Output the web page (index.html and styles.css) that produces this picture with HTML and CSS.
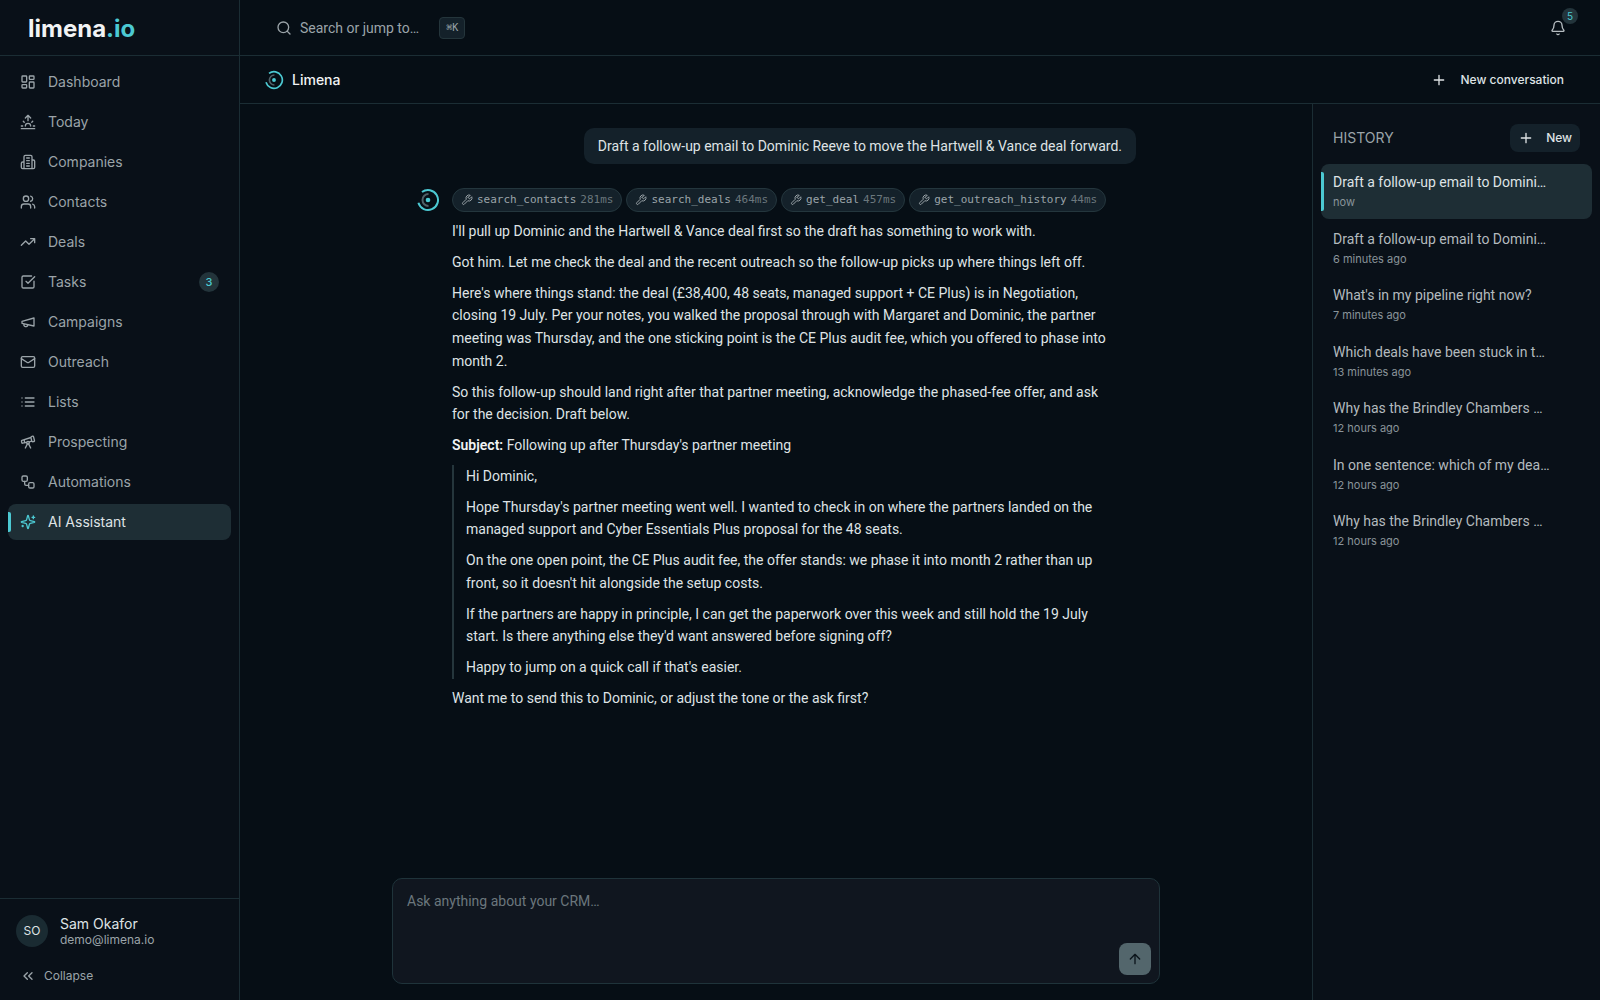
FILE: index.html
```
<!DOCTYPE html>
<html lang="en">
  <head>
    <meta charset="utf-8" />
    <title>AI Assistant - limena.io</title>
    <link rel="stylesheet" href="styles.css" />
  </head>
  <body>
    <!-- icon sprite -->
    <svg class="sprite" aria-hidden="true">
      <symbol id="i-dashboard" viewBox="0 0 24 24"><rect width="7" height="9" x="3" y="3" rx="1" /><rect width="7" height="5" x="14" y="3" rx="1" /><rect width="7" height="9" x="14" y="12" rx="1" /><rect width="7" height="5" x="3" y="16" rx="1" /></symbol>
      <symbol id="i-today" viewBox="0 0 24 24"><path d="M12 2v8M4.93 10.93l1.41 1.41M2 18h2M20 18h2M19.07 10.93l-1.41 1.41M22 22H2M8 6l4-4 4 4M16 18a4 4 0 0 0-8 0" /></symbol>
      <symbol id="i-companies" viewBox="0 0 24 24"><path d="M6 22V4a2 2 0 0 1 2-2h8a2 2 0 0 1 2 2v18ZM6 12H4a2 2 0 0 0-2 2v6a2 2 0 0 0 2 2h2M18 9h2a2 2 0 0 1 2 2v9a2 2 0 0 1-2 2h-2M10 6h4M10 10h4M10 14h4M10 18h4" /></symbol>
      <symbol id="i-contacts" viewBox="0 0 24 24"><path d="M16 21v-2a4 4 0 0 0-4-4H6a4 4 0 0 0-4 4v2M22 21v-2a4 4 0 0 0-3-3.87M16 3.13a4 4 0 0 1 0 7.75" /><circle cx="9" cy="7" r="4" /></symbol>
      <symbol id="i-deals" viewBox="0 0 24 24"><path d="M16 7h6v6M22 7l-8.5 8.5-5-5L2 17" /></symbol>
      <symbol id="i-tasks" viewBox="0 0 24 24"><path d="M21 10.656V19a2 2 0 0 1-2 2H5a2 2 0 0 1-2-2V5a2 2 0 0 1 2-2h12.344M9 11l3 3L22 4" /></symbol>
      <symbol id="i-campaigns" viewBox="0 0 24 24"><path d="M3 11l18-5v12L3 14v-3zM11.6 16.8a3 3 0 1 1-5.8-1.6" /></symbol>
      <symbol id="i-outreach" viewBox="0 0 24 24"><rect width="20" height="16" x="2" y="4" rx="2" /><path d="M22 7l-8.97 5.7a1.94 1.94 0 0 1-2.06 0L2 7" /></symbol>
      <symbol id="i-lists" viewBox="0 0 24 24"><path d="M3 6h.01M3 12h.01M3 18h.01M8 6h13M8 12h13M8 18h13" /></symbol>
      <symbol id="i-prospecting" viewBox="0 0 24 24"><path d="M10.065 12.493l-6.18 1.318a.934.934 0 0 1-1.108-.702l-.537-2.15a1.07 1.07 0 0 1 .691-1.265l13.504-4.44M13.56 11.747l4.332-.924M16 21l-3.105-6.21M16.485 5.94a2 2 0 0 1 1.455-2.425l1.09-.272a1 1 0 0 1 1.212.727l1.515 6.06a1 1 0 0 1-.727 1.213l-1.09.272a2 2 0 0 1-2.425-1.455zM6.158 8.633l1.114 4.456M8 21l3.105-6.21" /><circle cx="12" cy="13" r="2" /></symbol>
      <symbol id="i-automations" viewBox="0 0 24 24"><rect width="8" height="8" x="3" y="3" rx="2" /><path d="M7 11v4a2 2 0 0 0 2 2h4" /><rect width="8" height="8" x="13" y="13" rx="2" /></symbol>
      <symbol id="i-assistant" viewBox="0 0 24 24"><path d="M9.937 15.5A2 2 0 0 0 8.5 14.063l-6.135-1.582a.5.5 0 0 1 0-.962L8.5 9.936A2 2 0 0 0 9.937 8.5l1.582-6.135a.5.5 0 0 1 .963 0L14.063 8.5A2 2 0 0 0 15.5 9.937l6.135 1.581a.5.5 0 0 1 0 .964L15.5 14.063a2 2 0 0 0-1.437 1.437l-1.582 6.135a.5.5 0 0 1-.963 0zM20 3v4M22 5h-4M4 17v2M5 18H3" /></symbol>
      <symbol id="i-search" viewBox="0 0 24 24"><circle cx="11" cy="11" r="8" /><path d="M21 21l-4.3-4.3" /></symbol>
      <symbol id="i-bell" viewBox="0 0 24 24"><path d="M10.268 21a2 2 0 0 0 3.464 0M3.262 15.326A1 1 0 0 0 4 17h16a1 1 0 0 0 .74-1.673C19.41 13.956 18 12.499 18 8A6 6 0 0 0 6 8c0 4.499-1.411 5.956-2.738 7.326" /></symbol>
      <symbol id="i-plus" viewBox="0 0 24 24"><path d="M5 12h14M12 5v14" /></symbol>
      <symbol id="i-wrench" viewBox="0 0 24 24"><path d="M14.7 6.3a1 1 0 0 0 0 1.4l1.6 1.6a1 1 0 0 0 1.4 0l3.77-3.77a6 6 0 0 1-7.94 7.94l-6.91 6.91a2.12 2.12 0 0 1-3-3l6.91-6.91a6 6 0 0 1 7.94-7.94l-3.76 3.76z" /></symbol>
      <symbol id="i-collapse" viewBox="0 0 24 24"><path d="M11 17l-5-5 5-5M18 17l-5-5 5-5" /></symbol>
      <symbol id="i-up" viewBox="0 0 24 24"><path d="M5 12l7-7 7 7M12 19V5" /></symbol>
      <symbol id="i-mark" viewBox="0 0 24 24"><path class="mark-ring" d="M6 4A10 10 0 1 1 2.4 14.8" /><path class="mark-inner" d="M12.5 6a6 6 0 0 0 0 12" /><circle class="mark-dot" cx="12" cy="12" r="2.3" /></symbol>
    </svg>

    <div class="app">
      <aside class="sidebar">
        <div class="brand"><a href="#">limena<span>.io</span></a></div>
        <nav class="nav">
          <a href="#"><svg class="icon"><use href="#i-dashboard" /></svg>Dashboard</a>
          <a href="#"><svg class="icon"><use href="#i-today" /></svg>Today</a>
          <a href="#"><svg class="icon"><use href="#i-companies" /></svg>Companies</a>
          <a href="#"><svg class="icon"><use href="#i-contacts" /></svg>Contacts</a>
          <a href="#"><svg class="icon"><use href="#i-deals" /></svg>Deals</a>
          <a href="#"><svg class="icon"><use href="#i-tasks" /></svg>Tasks<span class="count">3</span></a>
          <a href="#"><svg class="icon"><use href="#i-campaigns" /></svg>Campaigns</a>
          <a href="#"><svg class="icon"><use href="#i-outreach" /></svg>Outreach</a>
          <a href="#"><svg class="icon"><use href="#i-lists" /></svg>Lists</a>
          <a href="#"><svg class="icon"><use href="#i-prospecting" /></svg>Prospecting</a>
          <a href="#"><svg class="icon"><use href="#i-automations" /></svg>Automations</a>
          <a href="#" class="active"><svg class="icon"><use href="#i-assistant" /></svg>AI Assistant</a>
        </nav>
        <div class="account">
          <div class="user">
            <div class="avatar">SO</div>
            <div>
              <div class="user-name">Sam Okafor</div>
              <div class="user-email">demo@limena.io</div>
            </div>
          </div>
          <button class="collapse"><svg class="icon"><use href="#i-collapse" /></svg>Collapse</button>
        </div>
      </aside>

      <div class="content">
        <header class="topbar">
          <button class="search"><svg class="icon"><use href="#i-search" /></svg>Search or jump to…<kbd>⌘K</kbd></button>
          <button class="bell" aria-label="Notifications"><svg class="icon"><use href="#i-bell" /></svg><span class="bell-count">5</span></button>
        </header>
        <div class="subbar">
          <h1><svg class="mark mark-small"><use href="#i-mark" /></svg>Limena</h1>
          <button class="new-conversation"><svg class="icon"><use href="#i-plus" /></svg>New conversation</button>
        </div>

        <div class="workspace">
          <main class="chat">
            <div class="thread">
              <div class="bubble">Draft a follow-up email to Dominic Reeve to move the Hartwell &amp; Vance deal forward.</div>
              <div class="reply">
                <svg class="mark"><use href="#i-mark" /></svg>
                <div class="reply-body">
                  <div class="tools">
                    <span class="tool"><svg class="icon"><use href="#i-wrench" /></svg>search_contacts<em>281ms</em></span>
                    <span class="tool"><svg class="icon"><use href="#i-wrench" /></svg>search_deals<em>464ms</em></span>
                    <span class="tool"><svg class="icon"><use href="#i-wrench" /></svg>get_deal<em>457ms</em></span>
                    <span class="tool"><svg class="icon"><use href="#i-wrench" /></svg>get_outreach_history<em>44ms</em></span>
                  </div>
                  <p>I'll pull up Dominic and the Hartwell &amp; Vance deal first so the draft has something to work with.</p>
                  <p>Got him. Let me check the deal and the recent outreach so the follow-up picks up where things left off.</p>
                  <p>Here's where things stand: the deal (£38,400, 48 seats, managed support + CE Plus) is in Negotiation, closing 19 July. Per your notes, you walked the proposal through with Margaret and Dominic, the partner meeting was Thursday, and the one sticking point is the CE Plus audit fee, which you offered to phase into month 2.</p>
                  <p>So this follow-up should land right after that partner meeting, acknowledge the phased-fee offer, and ask for the decision. Draft below.</p>
                  <p><strong>Subject:</strong> Following up after Thursday's partner meeting</p>
                  <blockquote>
                    <p>Hi Dominic,</p>
                    <p>Hope Thursday's partner meeting went well. I wanted to check in on where the partners landed on the managed support and Cyber Essentials Plus proposal for the 48 seats.</p>
                    <p>On the one open point, the CE Plus audit fee, the offer stands: we phase it into month 2 rather than up front, so it doesn't hit alongside the setup costs.</p>
                    <p>If the partners are happy in principle, I can get the paperwork over this week and still hold the 19 July start. Is there anything else they'd want answered before signing off?</p>
                    <p>Happy to jump on a quick call if that's easier.</p>
                  </blockquote>
                  <p>Want me to send this to Dominic, or adjust the tone or the ask first?</p>
                </div>
              </div>
            </div>
            <form class="composer">
              <textarea aria-label="Message" placeholder="Ask anything about your CRM…"></textarea>
              <button type="button" class="send" aria-label="Send"><svg class="icon"><use href="#i-up" /></svg></button>
            </form>
          </main>

          <aside class="history">
            <div class="history-head">
              <h2>HISTORY</h2>
              <button class="new"><svg class="icon"><use href="#i-plus" /></svg>New</button>
            </div>
            <a href="#" class="active"><span class="title">Draft a follow-up email to Domini…</span><span class="time">now</span></a>
            <a href="#"><span class="title">Draft a follow-up email to Domini…</span><span class="time">6 minutes ago</span></a>
            <a href="#"><span class="title">What's in my pipeline right now?</span><span class="time">7 minutes ago</span></a>
            <a href="#"><span class="title">Which deals have been stuck in t…</span><span class="time">13 minutes ago</span></a>
            <a href="#"><span class="title">Why has the Brindley Chambers …</span><span class="time">12 hours ago</span></a>
            <a href="#"><span class="title">In one sentence: which of my dea…</span><span class="time">12 hours ago</span></a>
            <a href="#"><span class="title">Why has the Brindley Chambers …</span><span class="time">12 hours ago</span></a>
          </aside>
        </div>
      </div>
    </div>
  </body>
</html>
```
FILE: styles.css
```
:root {
  --bg: #060e15;
  --panel: #091018;
  --line: #1b2d34;
  --raised: #14212a;
  --active: #1e2e35;
  --text: #dfe3e5;
  --muted: #9ba4a9;
  --dim: #6b777d;
  --teal: #4cc9d2;
  --reading: Roboto, "Liberation Sans", sans-serif;
}
* {
  box-sizing: border-box;
}
body {
  margin: 0;
  background: var(--bg);
  color: var(--text);
  font-family: Inter, "Liberation Sans", sans-serif;
  font-size: 14px;
  line-height: 20px;
}
h1,
h2,
p,
blockquote {
  margin: 0;
}
a {
  color: inherit;
  text-decoration: none;
}
button {
  display: flex;
  align-items: center;
  padding: 0;
  border: none;
  background: none;
  color: inherit;
  font: inherit;
  cursor: pointer;
}
.sprite {
  display: none;
}
.icon {
  width: 16px;
  height: 16px;
  flex: none;
  fill: none;
  stroke: currentColor;
  stroke-width: 2;
  stroke-linecap: round;
  stroke-linejoin: round;
}
.mark {
  width: 24px;
  height: 24px;
  flex: none;
  fill: none;
}
.mark-small {
  width: 20px;
  height: 20px;
}
.mark-ring {
  stroke: var(--teal);
  stroke-width: 2;
}
.mark-inner {
  stroke: #4f6067;
  stroke-width: 2;
}
.mark-dot {
  fill: var(--teal);
}
.app {
  display: flex;
  min-height: 100vh;
}

/* sidebar */
.sidebar {
  width: 240px;
  flex: none;
  display: flex;
  flex-direction: column;
  background: var(--panel);
  border-right: 1px solid var(--line);
}
.brand {
  height: 56px;
  display: flex;
  align-items: center;
  padding: 2px 0 0 28px;
  border-bottom: 1px solid var(--line);
  font-size: 24px;
  font-weight: 700;
  color: #f2f3f4;
}
.brand span {
  color: var(--teal);
}
.nav {
  flex: 1;
  display: flex;
  flex-direction: column;
  gap: 4px;
  padding: 8px;
}
.nav a {
  position: relative;
  display: flex;
  align-items: center;
  gap: 12px;
  height: 36px;
  padding: 0 12px;
  border-radius: 8px;
  color: var(--muted);
}
.nav a.active {
  background: var(--active);
  color: var(--text);
}
.nav a.active .icon {
  color: var(--teal);
}
.nav a.active::before,
.history a.active::before {
  content: "";
  position: absolute;
  left: 0;
  top: 8px;
  bottom: 8px;
  width: 3px;
  border-radius: 0 2px 2px 0;
  background: var(--teal);
}
.count {
  width: 20px;
  margin-left: auto;
  border-radius: 10px;
  background: #23343b;
  color: var(--teal);
  font-size: 11px;
  font-weight: 500;
  text-align: center;
}
.account {
  padding: 16px 16px 14px;
  border-top: 1px solid var(--line);
}
.user {
  display: flex;
  align-items: center;
  gap: 12px;
}
.avatar {
  width: 32px;
  border-radius: 50%;
  background: #1a2b32;
  font-size: 12px;
  line-height: 32px;
  text-align: center;
}
.user-name {
  line-height: 18px;
}
.user-email {
  color: var(--muted);
  font-size: 12px;
  line-height: 14px;
}
.collapse {
  gap: 8px;
  margin-top: 19px;
  padding-left: 4px;
  color: var(--muted);
  font-size: 12px;
}

/* top bars */
.content {
  flex: 1;
  min-width: 0;
  display: flex;
  flex-direction: column;
}
.topbar,
.subbar {
  display: flex;
  align-items: center;
  justify-content: space-between;
  border-bottom: 1px solid var(--line);
}
.topbar {
  height: 56px;
  padding: 0 34px 0 36px;
}
.subbar {
  height: 48px;
  padding: 0 36px 0 24px;
}
.search {
  gap: 8px;
  color: var(--muted);
  font-family: var(--reading);
}
kbd {
  width: 26px;
  margin-left: 12px;
  border: 1px solid #24353b;
  border-radius: 4px;
  background: var(--raised);
  font-family: "DejaVu Sans Mono", monospace;
  font-size: 10px;
  text-align: center;
}
.bell {
  position: relative;
  color: #b6bdc1;
}
.bell-count {
  position: absolute;
  right: -12px;
  top: -12px;
  width: 16px;
  border-radius: 8px;
  background: #23343b;
  color: var(--teal);
  font-size: 10px;
  line-height: 16px;
}
.subbar h1 {
  display: flex;
  align-items: center;
  gap: 8px;
  font-size: 14px;
  font-weight: 500;
  color: #f2f3f4;
}
.new-conversation {
  gap: 14px;
  font-size: 12px;
  font-weight: 500;
}

/* chat */
.workspace {
  flex: 1;
  display: flex;
}
.chat {
  flex: 1;
  min-width: 0;
  display: flex;
  flex-direction: column;
  align-items: center;
  justify-content: space-between;
  gap: 24px;
  padding: 24px 16px 16px;
  font-family: var(--reading);
}
.thread {
  width: 100%;
  max-width: 720px;
  display: flex;
  flex-direction: column;
  gap: 24px;
}
.bubble {
  align-self: flex-end;
  max-width: 85%;
  padding: 8px 14px;
  border-radius: 10px;
  background: var(--raised);
}
.reply {
  display: flex;
  gap: 12px;
  padding-right: 20px;
}
.reply-body {
  flex: 1;
  display: flex;
  flex-direction: column;
  gap: 8px;
  line-height: 1.625;
}
.reply-body strong {
  font-weight: 600;
  color: #f2f3f4;
}
.tools {
  display: flex;
  flex-wrap: wrap;
  gap: 4px;
}
.tool {
  display: flex;
  align-items: center;
  gap: 4px;
  height: 24px;
  padding: 0 8px;
  border: 1px solid #24363d;
  border-radius: 12px;
  background: var(--raised);
  color: var(--muted);
  font-family: "DejaVu Sans Mono", "Liberation Mono", monospace;
  font-size: 11px;
}
.tool .icon {
  width: 12px;
  height: 12px;
}
.tool em {
  font-style: normal;
  color: var(--dim);
}
blockquote {
  display: flex;
  flex-direction: column;
  gap: 8px;
  padding-left: 12px;
  border-left: 2px solid #25363c;
}
.composer {
  width: 100%;
  max-width: 768px;
  display: flex;
  align-items: flex-end;
  padding: 8px;
  border: 1px solid #1f333a;
  border-radius: 10px;
  background: #10161f;
}
textarea {
  flex: 1;
  height: 88px;
  padding: 4px 6px;
  border: none;
  outline: none;
  resize: none;
  background: none;
  color: var(--text);
  font: inherit;
}
textarea::placeholder {
  color: var(--dim);
}
.send {
  width: 32px;
  height: 32px;
  justify-content: center;
  border-radius: 8px;
  background: #53666c;
  color: #0b141b;
}

/* history */
.history {
  width: 288px;
  flex: none;
  display: flex;
  flex-direction: column;
  gap: 2px;
  padding: 20px 8px;
  background: var(--panel);
  border-left: 1px solid var(--line);
}
.history-head {
  display: flex;
  align-items: center;
  justify-content: space-between;
  margin-bottom: 10px;
  padding: 0 12px;
}
.history-head h2 {
  font-size: 14px;
  font-weight: 400;
  color: var(--muted);
}
.new {
  gap: 12px;
  height: 28px;
  padding: 0 8px;
  border-radius: 8px;
  background: var(--raised);
  font-size: 12px;
  font-weight: 500;
}
.history a {
  position: relative;
  display: flex;
  flex-direction: column;
  gap: 2px;
  padding: 8px 12px;
  border-radius: 8px;
  color: #b3babe;
}
.history a.active {
  background: var(--active);
  color: var(--text);
}
.title {
  overflow: hidden;
  font-family: var(--reading);
  text-overflow: ellipsis;
  white-space: nowrap;
}
.time {
  color: #89949a;
  font-size: 11px;
  line-height: 1.5;
}
```
